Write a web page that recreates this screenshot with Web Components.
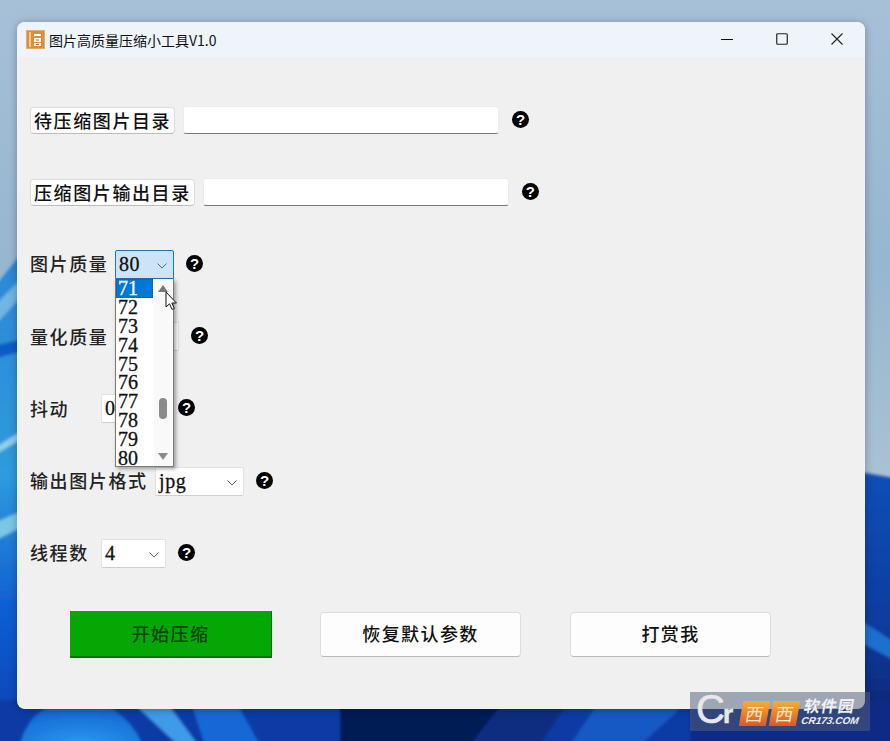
<!DOCTYPE html>
<html lang="zh">
<head>
<meta charset="utf-8">
<title>图片高质量压缩小工具V1.0</title>
<style>
    html, body { margin: 0; height: 100%; overflow: hidden; }
</style>
</head>
<body>
<desktop-view>
    <app-window heading="图片高质量压缩小工具V1.0">
        <form-row>
            <label-button>待压缩图片目录</label-button>
            <path-field style="width:316px"></path-field>
            <help-dot style="margin-left:5px"></help-dot>
        </form-row>
        <form-row>
            <label-button>压缩图片输出目录</label-button>
            <path-field style="width:306px"></path-field>
            <help-dot style="margin-left:5px"></help-dot>
        </form-row>
        <form-row>
            <field-label style="width:85px">图片质量</field-label>
            <drop-select value="80" open style="width:59px"></drop-select>
            <help-dot style="margin-left:4px"></help-dot>
        </form-row>
        <form-row>
            <field-label style="width:85px">量化质量</field-label>
            <drop-select value="" style="width:64px"></drop-select>
            <help-dot style="margin-left:4px"></help-dot>
        </form-row>
        <form-row>
            <field-label style="width:71px">抖动</field-label>
            <drop-select value="0" style="width:65px"></drop-select>
            <help-dot style="margin-left:4px"></help-dot>
        </form-row>
        <form-row>
            <field-label style="width:125px">输出图片格式</field-label>
            <drop-select value="jpg" style="width:89px"></drop-select>
            <help-dot style="margin-left:4px"></help-dot>
        </form-row>
        <form-row>
            <field-label style="width:71px">线程数</field-label>
            <drop-select value="4" style="width:65px"></drop-select>
            <help-dot style="margin-left:4px"></help-dot>
        </form-row>
        <action-bar slot="actions">
            <action-button primary>开始压缩</action-button>
            <action-button>恢复默认参数</action-button>
            <action-button>打赏我</action-button>
        </action-bar>
    </app-window>
    <site-mark></site-mark>
</desktop-view>

<script>
const CJK = '"Noto Sans CJK SC", sans-serif'
const SERIF = '"Liberation Serif", "Noto Sans CJK SC", serif'

// small helper, every element below just hands over its markup
class Base extends HTMLElement {
    constructor() {
        super()
        this.root = this.attachShadow({ mode: 'open' })
    }
}

class DesktopView extends Base {
    connectedCallback() {
        this.root.innerHTML = `
            <style>
                :host {
                    display: block;
                    position: relative;
                    width: 890px;
                    height: 741px;
                    box-sizing: border-box;
                    padding: 22px 25px 32px 17px;
                    overflow: hidden;
                    background: #a3bdd3;
                }
                svg { position: absolute; left: 0; top: 0; }
            </style>
            <svg width="890" height="741" viewBox="0 0 890 741">
                <defs>
                    <linearGradient id="sky" x1="0" y1="0" x2="0" y2="1">
                        <stop offset="0" stop-color="#a6c0d8"/>
                        <stop offset="0.35" stop-color="#97b6d0"/>
                        <stop offset="0.65" stop-color="#a9c2d3"/>
                    </linearGradient>
                    <linearGradient id="deep" x1="0" y1="0" x2="0" y2="1">
                        <stop offset="0" stop-color="#0b4fb8"/>
                        <stop offset="0.6" stop-color="#0a3a9c"/>
                        <stop offset="1" stop-color="#051f66"/>
                    </linearGradient>
                    <linearGradient id="left" x1="0" y1="0" x2="0" y2="1">
                        <stop offset="0" stop-color="#2c86d6"/>
                        <stop offset="0.45" stop-color="#2f9bdc"/>
                        <stop offset="0.72" stop-color="#0f5fd0"/>
                        <stop offset="1" stop-color="#0a3fb0"/>
                    </linearGradient>
                    <radialGradient id="bulge" cx="0.5" cy="1" r="0.8">
                        <stop offset="0" stop-color="#2a9af0"/>
                        <stop offset="1" stop-color="#1467d2"/>
                    </radialGradient>
                    <filter id="soft"><feGaussianBlur stdDeviation="1.6"/></filter>
                </defs>
                <rect width="890" height="741" fill="url(#sky)"/>
                <g filter="url(#soft)">
                    <path d="M-4 285 L20 255 L20 745 L-4 745Z" fill="url(#left)"/>
                    <path d="M-4 304 L20 280 L20 298 L-4 324Z" fill="#6fb6e2"/>
                    <path d="M-4 345 L20 340 L20 352 L-4 358Z" fill="#0e5cc4"/>
                    <path d="M-4 447 L20 432 L20 440 L-4 454Z" fill="#8fd0ea"/>
                    <path d="M-4 522 L20 512 L20 528 L-4 540Z" fill="#7cc6e8"/>
                    <path d="M860 472 L894 478 L894 745 L860 745Z" fill="url(#deep)"/>
                    <path d="M860 620 L894 642 L894 660 L860 642Z" fill="#1f6fd0"/>
                    <rect x="-4" y="700" width="898" height="45" fill="#0a3aa6"/>
                    <path d="M20 745 C30 705 60 700 90 700 C115 705 135 725 142 745Z" fill="url(#bulge)"/>
                    <path d="M130 700 L178 745 L198 745 L165 700Z" fill="#3e9bea"/>
                    <path d="M190 700 L205 745 L260 745 L235 700Z" fill="#1668d6"/>
                    <rect x="340" y="700" width="165" height="45" fill="#041a55"/>
                    <path d="M505 700 L470 745 L540 745 L570 700Z" fill="#0a2d80"/>
                    <path d="M600 700 L570 745 L640 745 L690 700Z" fill="#1658c4"/>
                    <rect x="690" y="700" width="204" height="45" fill="#0a2c86"/>
                </g>
            </svg>
            <slot></slot>
        `
    }
}

class AppWindow extends Base {
    connectedCallback() {
        this.root.innerHTML = `
            <style>
                :host {
                    display: flex;
                    flex-direction: column;
                    position: relative;
                    height: 687px;
                    border-radius: 8px;
                    overflow: hidden;
                    background: #f0f0f0;
                    box-shadow: 0 1px 8px rgba(0, 0, 0, .28);
                }
                .bar {
                    flex: none;
                    height: 35px;
                    display: flex;
                    align-items: center;
                    background: #eef4f9;
                    padding-left: 9px;
                    font: 14px ${CJK};
                    color: #111;
                }
                .logo { width: 19px; height: 19px; margin-right: 4px; flex: none; }
                .name { flex: 1; }
                .ctl { width: 55px; height: 35px; display: flex; align-items: center; justify-content: center; margin-top: -1px; }
                .ctl svg { display: block; }
                .form { padding: 27px 0 0 13px; display: grid; grid-auto-rows: 72.2px; }
                .actions { margin-top: 22px; }
            </style>
            <div class="bar">
                <svg class="logo" viewBox="0 0 19 19">
                    <rect x=".5" y=".5" width="18" height="18" fill="#d98f3e" stroke="#e2ac6c"/>
                    <rect x="3" y="2" width="2" height="15" fill="#efc98f"/>
                    <path d="M8 4h7v2H8zM8 8h7v4H8zM8 13h7v3H8z" fill="#fff"/>
                    <path d="M10 9.5h3v1h-3zM10 14h3v1h-3z" fill="#b8702a"/>
                </svg>
                <div class="name">${this.getAttribute('heading')}</div>
                <div class="ctl"><svg width="12" height="12"><path d="M0 6.5h12" stroke="#111"/></svg></div>
                <div class="ctl"><svg width="12" height="12"><rect x=".75" y=".75" width="10.5" height="10.5" rx="1" fill="none" stroke="#222" stroke-width="1.2"/></svg></div>
                <div class="ctl"><svg width="12" height="12"><path d="M.5 .5l11 11M11.5 .5l-11 11" stroke="#222" stroke-width="1.1"/></svg></div>
                <div style="width:1px"></div>
            </div>
            <div class="form"><slot></slot></div>
            <div class="actions"><slot name="actions"></slot></div>
        `
    }
}

class FormRow extends Base {
    connectedCallback() {
        this.root.innerHTML = `
            <style>
                :host { display: flex; align-items: center; gap: 8px; }
            </style>
            <slot></slot>
        `
    }
}

class LabelButton extends Base {
    connectedCallback() {
        this.root.innerHTML = `
            <style>
                :host {
                    display: block;
                    box-sizing: border-box;
                    height: 27px;
                    padding: 0 3px;
                    background: #fdfdfd;
                    border: 1px solid #dcdcdc;
                    border-bottom-color: #bdbdbd;
                    border-radius: 4px;
                    font: 500 18px/24px ${CJK};
                    letter-spacing: 1.6px;
                    color: #111;
                    white-space: nowrap;
                }
            </style>
            <slot></slot>
        `
    }
}

class PathField extends Base {
    connectedCallback() {
        this.root.innerHTML = `
            <style>
                :host {
                    display: block;
                    box-sizing: border-box;
                    height: 28px;
                    background: #fff;
                    border: 1px solid #ececec;
                    border-bottom: 1px solid #7a7a7a;
                    border-radius: 3px;
                }
            </style>
        `
    }
}

class FieldLabel extends Base {
    connectedCallback() {
        this.root.innerHTML = `
            <style>
                :host {
                    display: block;
                    flex: none;
                    margin: -2px -8px 0 0;
                    font: 500 18px/24px ${CJK};
                    letter-spacing: 1.6px;
                    color: #222;
                    white-space: nowrap;
                }
            </style>
            <slot></slot>
        `
    }
}

class HelpDot extends Base {
    connectedCallback() {
        this.root.innerHTML = `
            <style>
                :host {
                    display: flex;
                    flex: none;
                    align-items: center;
                    justify-content: center;
                    width: 17px;
                    height: 17px;
                    margin-top: -2px;
                    border-radius: 50%;
                    background: #000;
                    color: #fff;
                    font: bold 15px/17px "Liberation Sans", sans-serif;
                }
            </style>
            ?
        `
    }
}

class DropSelect extends Base {
    connectedCallback() {
        const open = this.hasAttribute('open')
        const items = []
        for (let n = 71; n <= 80; n++) items.push(n)
        this.root.innerHTML = `
            <style>
                :host {
                    display: block;
                    flex: none;
                    position: relative;
                    box-sizing: border-box;
                    height: 29px;
                    font: 20px/27px ${SERIF};
                    -webkit-text-stroke: .3px currentColor;
                    color: #111;
                }
                .box {
                    box-sizing: border-box;
                    height: 29px;
                    padding-left: 3px;
                    letter-spacing: .6px;
                    background: #fff;
                    border: 1px solid #e2e2e2;
                    border-bottom-color: #cfcfcf;
                    border-radius: 2px;
                    position: relative;
                }
                .box.open { background: #cce4f7; border-color: #2a70ad; border-radius: 2px 2px 0 0; }
                .chev { position: absolute; right: 5px; top: 11px; }
                .pop {
                    position: absolute;
                    left: 0;
                    top: 29px;
                    z-index: 5;
                    box-sizing: border-box;
                    width: 59px;
                    height: 188px;
                    background: #fff;
                    border: 1px solid #7a7a7a;
                    border-top: none;
                    box-shadow: 2px 2px 4px rgba(0, 0, 0, .35);
                }
                .item { height: 18.9px; width: 37px; padding-left: 2px; box-sizing: border-box; line-height: 18.9px; }
                .item.on { background: #0078d7; color: #fff; outline: 1px dotted #5a4a20; outline-offset: -1px; }
                .track { position: absolute; right: 0; top: 0; bottom: 0; width: 19px; background: #f9f9f9; }
                .thumb { position: absolute; left: 5px; top: 119px; width: 8px; height: 21px; border-radius: 4px; background: #8a8a8a; }
                .up, .down { position: absolute; left: 4px; width: 0; height: 0; border: 5px solid transparent; }
                .up { top: 1px; border-bottom: 7px solid #777; }
                .down { bottom: 1px; border-top: 7px solid #8a8a8a; }
            </style>
            <div class="box ${open ? 'open' : ''}">
                ${this.getAttribute('value')}
                <svg class="chev" width="12" height="8"><path d="M1.5 1.5l4.5 4.5 4.5-4.5" fill="none" stroke="#666"/></svg>
            </div>
            ${open ? `
                <div class="pop">
                    ${items.map(n => `<div class="item ${n === 71 ? 'on' : ''}">${n}</div>`).join('')}
                    <div class="track">
                        <div class="up"></div>
                        <div class="thumb"></div>
                        <div class="down"></div>
                    </div>
                    <svg style="position:absolute;left:49px;top:12px" width="13" height="20" viewBox="0 0 13 20">
                        <path d="M1 1v15l3.5-3.2 2.6 5.6 2.3-1-2.6-5.4h4.6z" fill="#fff" stroke="#111" stroke-width="1"/>
                    </svg>
                </div>
            ` : ''}
        `
    }
}

class ActionBar extends Base {
    connectedCallback() {
        this.root.innerHTML = `
            <style>
                :host { display: flex; align-items: center; gap: 49px; padding-left: 53px; }
            </style>
            <slot></slot>
        `
    }
}

class ActionButton extends Base {
    connectedCallback() {
        this.root.innerHTML = `
            <style>
                :host {
                    display: block;
                    box-sizing: border-box;
                    width: 201px;
                    height: 45px;
                    background: #fdfdfd;
                    border: 1px solid #dcdcdc;
                    border-bottom-color: #b8b8b8;
                    border-radius: 4px;
                    text-align: center;
                    font: 500 18px/41px ${CJK};
                    letter-spacing: 1.4px;
                    color: #111;
                }
                :host([primary]) {
                    width: 202px;
                    height: 47px;
                    margin-right: -1px;
                    background: #05a705;
                    border: none;
                    border-right: 1px solid #057205;
                    border-bottom: 2px solid #057205;
                    border-radius: 0;
                    line-height: 44px;
                    color: #054205;
                }
            </style>
            <slot></slot>
        `
    }
}

class SiteMark extends Base {
    connectedCallback() {
        this.root.innerHTML = `
            <style>
                :host {
                    position: absolute;
                    left: 690px;
                    top: 692px;
                    width: 180px;
                    height: 39px;
                    display: flex;
                    align-items: center;
                    background: rgba(85, 98, 122, .52);
                }
                .cr {
                    font: 40px/39px "Liberation Sans", sans-serif;
                    -webkit-text-stroke: .6px #e6e8ea;
                    color: #e6e8ea;
                    letter-spacing: -2px;
                    margin-left: 6px;
                    width: 45px;
                    flex: none;
                }
                .cr span { font-size: 26px; font-weight: bold; }
                .tile {
                    width: 27px;
                    height: 25px;
                    margin-right: 3px;
                    margin-top: 3px;
                    flex: none;
                    transform: skewX(-10deg);
                    background: linear-gradient(#f0b040, #e2561e);
                    color: #ffe9c8;
                    text-align: center;
                    font: 18px/25px ${CJK};
                }
                .txt { margin-left: 2px; color: #eef1f5; transform: skewX(-10deg); }
                .a { font: bold 16px/19px ${CJK}; letter-spacing: 1px; }
                .b { font: italic bold 10px/12px "Liberation Sans", sans-serif; }
            </style>
            <div class="cr">C<span>r</span></div>
            <div class="tile">西</div>
            <div class="tile">西</div>
            <div class="txt">
                <div class="a">软件园</div>
                <div class="b">CR173.COM</div>
            </div>
        `
    }
}

customElements.define('desktop-view', DesktopView)
customElements.define('app-window', AppWindow)
customElements.define('form-row', FormRow)
customElements.define('label-button', LabelButton)
customElements.define('path-field', PathField)
customElements.define('field-label', FieldLabel)
customElements.define('help-dot', HelpDot)
customElements.define('drop-select', DropSelect)
customElements.define('action-bar', ActionBar)
customElements.define('action-button', ActionButton)
customElements.define('site-mark', SiteMark)
</script>
</body>
</html>
